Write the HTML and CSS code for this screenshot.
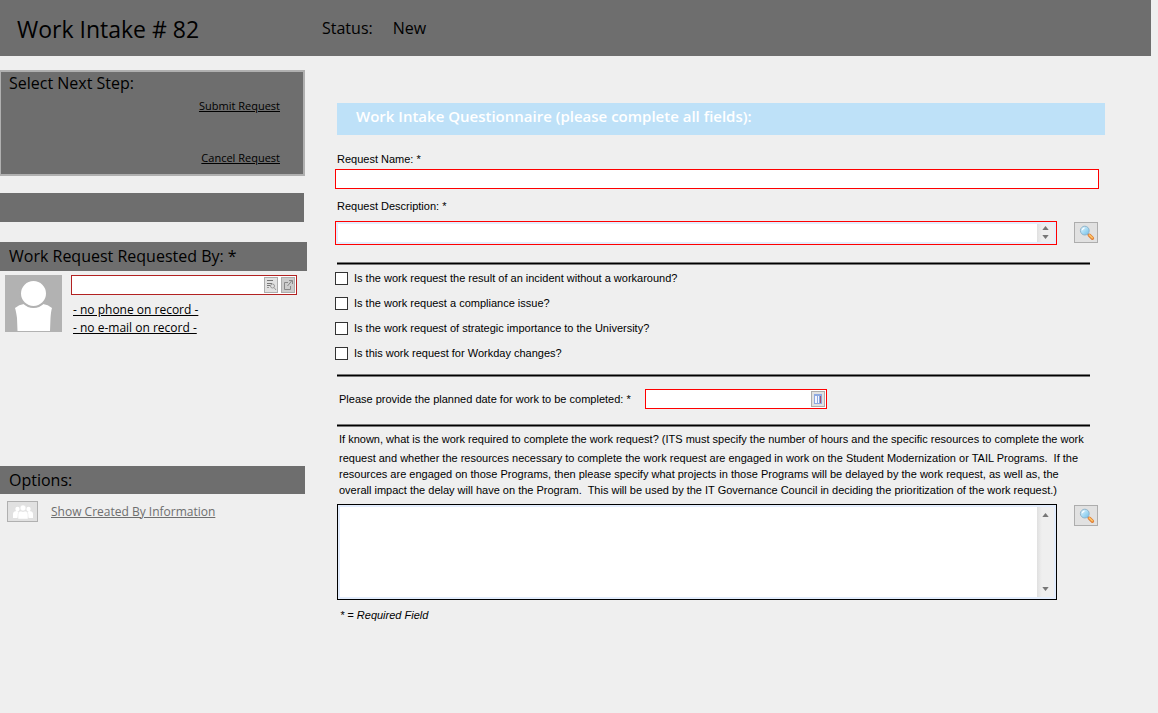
FILE: index.html
```html
<!DOCTYPE html>
<html lang="en">
<head>
<meta charset="utf-8">
<title>Work Intake # 82</title>
<link rel="stylesheet" href="styles.css">
</head>
<body>
<svg class="defs" aria-hidden="true">
  <defs>
    <linearGradient id="lens" x1="0" y1="0" x2="1" y2="1">
      <stop offset="0" stop-color="#e4f6fd"/>
      <stop offset="1" stop-color="#6fc0ea"/>
    </linearGradient>
    <symbol id="magnifier" viewBox="0 0 16 16">
      <path d="M8.600 8.800l1.600 1.400" stroke="#8b98a5" stroke-width="2"/>
      <path d="M10.400 10.200l3 3" stroke="#e0813a" stroke-width="3.400" stroke-linecap="round"/>
      <path d="M10.400 10l2.800 2.800" stroke="#ffc766" stroke-width="1.600" stroke-linecap="round"/>
      <circle cx="5.800" cy="5.600" r="4.400" fill="url(#lens)" stroke="#8fb4cb" stroke-width="1"/>
      <path d="M3.400 5.200a2.600 2.600 0 0 1 2.200-2.200" fill="none" stroke="#fff" stroke-width="1.200"/>
    </symbol>
  </defs>
</svg>
<header class="topbar">
  <h1 class="title">Work Intake # 82</h1>
  <p class="status"><span>Status:</span><span>New</span></p>
</header>
<div class="layout">
  <aside class="sidebar">
    <section class="steps">
      <h2 class="steps-title">Select Next Step:</h2>
      <a class="step" href="#">Submit Request</a>
      <a class="step" href="#">Cancel Request</a>
    </section>
    <div class="bar bar-empty"></div>
    <h2 class="bar bar-wide"><label for="requester">Work Request Requested By: *</label></h2>
    <div class="requester">
      <svg class="avatar" viewBox="0 0 57 57" aria-hidden="true">
        <rect width="57" height="57" fill="#b2b2b2"/>
        <path d="M12.500 56L12 43Q11 36 10 33Q14 29.500 19 29Q28.500 36 38 29Q43 29.500 47 33Q46 36 45.500 43L45 56z" fill="#fff"/>
        <circle cx="28.500" cy="18.500" r="13.500" fill="#fff" stroke="#b2b2b2" stroke-width="2"/>
      </svg>
      <div class="contact">
        <div class="field lookup">
          <input id="requester" type="text">
          <button class="mini" type="button" aria-label="Find person">
            <svg viewBox="0 0 12 14"><path d="M2 2.500h6M2 5.500h5M2 7.500h3" stroke="#777" fill="none"/><circle cx="7.500" cy="8" r="2" fill="none" stroke="#999"/><path d="M9 9.500l2 2.500M2 9.500h2" stroke="#999"/></svg>
          </button>
          <button class="mini mini-dark" type="button" aria-label="Open record">
            <svg viewBox="0 0 12 14"><path d="M6 4.500H2.500v7h6V8M5.500 8l4.500-5.500M7 2.500h3.500V6" stroke="#888" fill="none"/></svg>
          </button>
        </div>
        <a class="contact-link" href="#">- no phone on record -</a>
        <a class="contact-link" href="#">- no e-mail on record -</a>
      </div>
    </div>
    <h2 class="bar bar-options">Options:</h2>
    <div class="option">
      <button class="people" type="button" aria-label="Show created by">
        <svg viewBox="0 0 20 14"><g fill="#fff"><circle cx="4.500" cy="4" r="2.200"/><circle cx="15.500" cy="4" r="2.200"/><path d="M0 13V9q0-3 4-3l2 1-1.500 6zM20 13V9q0-3-4-3l-2 1 1.500 6z"/></g><g fill="#fff" stroke="#e1e1e1" stroke-width=".5"><circle cx="10" cy="3" r="2.900"/><path d="M5 14V9.500Q5 6 8 6q2 1.200 4 0 3 0 3 3.500V14z"/></g></svg>
      </button>
      <a class="option-link" href="#">Show Created By Information</a>
    </div>
  </aside>
  <main class="form">
    <h2 class="banner">Work Intake Questionnaire (please complete all fields):</h2>
    <label class="label" for="name">Request Name: *</label>
    <input class="field name" id="name" type="text">
    <label class="label" for="desc">Request Description: *</label>
    <div class="area-row">
      <div class="field area">
        <textarea id="desc"></textarea>
        <div class="scroll"><svg viewBox="0 0 8 5"><path d="M4 0l4 5H0z"/></svg><svg viewBox="0 0 8 5"><path d="M0 0h8L4 5z"/></svg></div>
      </div>
      <button class="zoom" type="button" aria-label="Expand description"><svg><use href="#magnifier"/></svg></button>
    </div>
    <hr class="rule">
    <div class="checks">
      <label class="check"><input type="checkbox">Is the work request the result of an incident without a workaround?</label>
      <label class="check"><input type="checkbox">Is the work request a compliance issue?</label>
      <label class="check"><input type="checkbox">Is the work request of strategic importance to the University?</label>
      <label class="check"><input type="checkbox">Is this work request for Workday changes?</label>
    </div>
    <hr class="rule">
    <div class="date-row">
      <label for="date">Please provide the planned date for work to be completed: *</label>
      <div class="field date">
        <input id="date" type="text">
        <button class="mini" type="button" aria-label="Pick date">
          <svg viewBox="0 0 12 14"><rect x="2" y="2" width="8" height="10" fill="#8ea9e0"/><path d="M3 4h2v7H3zM6 4h1v7H6z" fill="#f4f6ff"/><path d="M8.500 4v7" stroke="#a5506a"/></svg>
        </button>
      </div>
    </div>
    <hr class="rule">
    <label class="question" for="work">
      <span class="lead">If known, what is the work required to complete the work request? (ITS must specify the number of hours and the specific resources to complete the work</span>
      <span>request and whether the resources necessary to complete the work request are engaged in work on the Student Modernization or TAIL Programs.&nbsp; If the</span>
      <span>resources are engaged on those Programs, then please specify what projects in those Programs will be delayed by the work request, as well as, the</span>
      <span>overall impact the delay will have on the Program.&nbsp; This will be used by the IT Governance Council in deciding the prioritization of the work request.)</span>
    </label>
    <div class="area-row work-row">
      <div class="field area area-tall">
        <textarea id="work"></textarea>
        <div class="scroll"><svg viewBox="0 0 8 5"><path d="M4 0l4 5H0z"/></svg><svg viewBox="0 0 8 5"><path d="M0 0h8L4 5z"/></svg></div>
      </div>
      <button class="zoom" type="button" aria-label="Expand work required"><svg><use href="#magnifier"/></svg></button>
    </div>
    <p class="note">* = Required Field</p>
  </main>
</div>
</body>
</html>
```
FILE: styles.css
```css
* { box-sizing: border-box; }
body {
  margin: 0;
  background: #efefef;
  color: #000;
  font: 11px/16px "Liberation Sans", Arial, sans-serif;
}
h1, h2, p { margin: 0; font-weight: 400; }
a { color: inherit; }
input, textarea, button { margin: 0; padding: 0; border: 0; font: inherit; }
.defs { position: absolute; width: 0; height: 0; }

.topbar {
  display: grid;
  grid-template-columns: 305px 1fr;
  height: 56px;
  margin-right: 7px;
  padding-left: 17px;
  background: #6e6e6e;
  font-family: "Open Sans", "Noto Sans", sans-serif;
}
.title { padding-top: 13px; font-size: 23px; line-height: 32px; }
.status { display: flex; gap: 20px; padding-top: 18px; font-size: 16px; line-height: 20px; }

.layout { display: grid; grid-template-columns: 307px minmax(0, 1fr); }
.sidebar { padding-top: 14px; font-family: "Open Sans", "Noto Sans", sans-serif; }
.steps {
  display: flex;
  flex-direction: column;
  align-items: flex-end;
  gap: 36px;
  height: 106px;
  margin-right: 2px;
  padding: 1px 23px 0 8px;
  border: 2px solid #b0b0b0;
  border-left-width: 1px;
  background: #6e6e6e;
}
.steps-title { align-self: stretch; margin-bottom: -31px; font-size: 16px; line-height: 20px; }
.step { font-size: 11px; line-height: 16px; }
.bar {
  padding-left: 9px;
  background: #6e6e6e;
  font-size: 16px;
  line-height: 28px;
}
.bar-empty { height: 29px; margin: 17px 3px 20px 0; }
.bar-wide { height: 29px; }
.bar-options { height: 28px; margin: 129px 2px 0 0; }
.requester { display: flex; gap: 9px; padding: 4px 10px 0 5px; }
.avatar { width: 57px; height: 57px; }
.contact { display: flex; flex: 1; flex-direction: column; align-items: flex-start; }
.contact-link { margin-left: 2px; font-size: 12px; line-height: 18px; }
.option { display: flex; align-items: center; gap: 13px; padding: 7px 0 0 7px; }
.option-link { color: #6e6e6e; font-size: 12px; line-height: 20px; }
.people { width: 31px; height: 21px; border: 1px solid #b0b0b0; background: #e1e1e1; }
.people svg { display: block; width: 20px; height: 14px; margin: 0 auto; }

.field { border: 1px solid #f00; background: #fff; }
.lookup { display: flex; gap: 3px; width: 100%; height: 20px; margin-bottom: 6px; padding: 1px; border-color: #b22222; }
.lookup input, .date input { flex: 1; min-width: 0; }
.mini { width: 14px; height: 16px; border: 1px solid #adadad; background: #e1e1e1; }
.mini-dark { background: #ccc; }
.mini svg { display: block; width: 12px; height: 14px; }

.form { display: flex; flex-direction: column; padding: 47px 53px 0 28px; }
.banner {
  height: 32px;
  margin: 0 0 16px 2px;
  padding-left: 19px;
  background: #bee1f8;
  color: #fff;
  font: 600 15px/27px "Open Sans", "Noto Sans", sans-serif;
}
.label { margin-left: 2px; }
.name { height: 20px; margin: 2px 6px 9px 0; }
.area-row { display: flex; align-items: flex-start; gap: 17px; margin: 7px 7px 0 0; }
.area { display: flex; flex: 1; height: 24px; padding: 2px; background: #e3edfd; }
.area textarea { display: block; flex: 1; resize: none; background: #fff; }
.scroll {
  display: flex;
  flex-direction: column;
  align-items: center;
  justify-content: space-between;
  width: 17px;
  padding: 2px 0 3px;
  background: linear-gradient(90deg, #e0e0e0, #efefef 5px);
}
.scroll svg { width: 7px; height: 4px; fill: #777; }
.area-tall { height: 96px; border-color: #000; }
.area-tall .scroll { padding: 6px 0; }
.zoom { width: 24px; height: 21px; margin-top: 1px; border: 1px solid #adadad; background: #e1e1e1; }
.zoom svg { display: block; width: 16px; height: 16px; margin: 0 0 0 4px; }
.rule {
  width: auto;
  height: 3px;
  margin: 0 15px 0 2px;
  border: solid #777;
  border-width: 1px 0;
  background: #000;
}
.area-row + .rule { margin-top: 17px; }
.checks { display: flex; flex-direction: column; gap: 9px; padding: 5px 0 13px; }
.check { display: flex; align-items: center; gap: 6px; }
.check input { appearance: none; width: 13px; height: 13px; border: 1px solid #333; background: #fff; }
.date-row { display: flex; align-items: center; gap: 14px; padding: 12px 0 15px 4px; }
.date { display: flex; width: 182px; height: 20px; padding: 1px; }
.question { display: block; margin: 4px 0 0 4px; }
.question span { display: block; }
.question .lead { margin-bottom: 3px; }
.work-row { margin: 6px 7px 7px 2px; }
.note { padding-left: 5px; font-style: italic; }
```
